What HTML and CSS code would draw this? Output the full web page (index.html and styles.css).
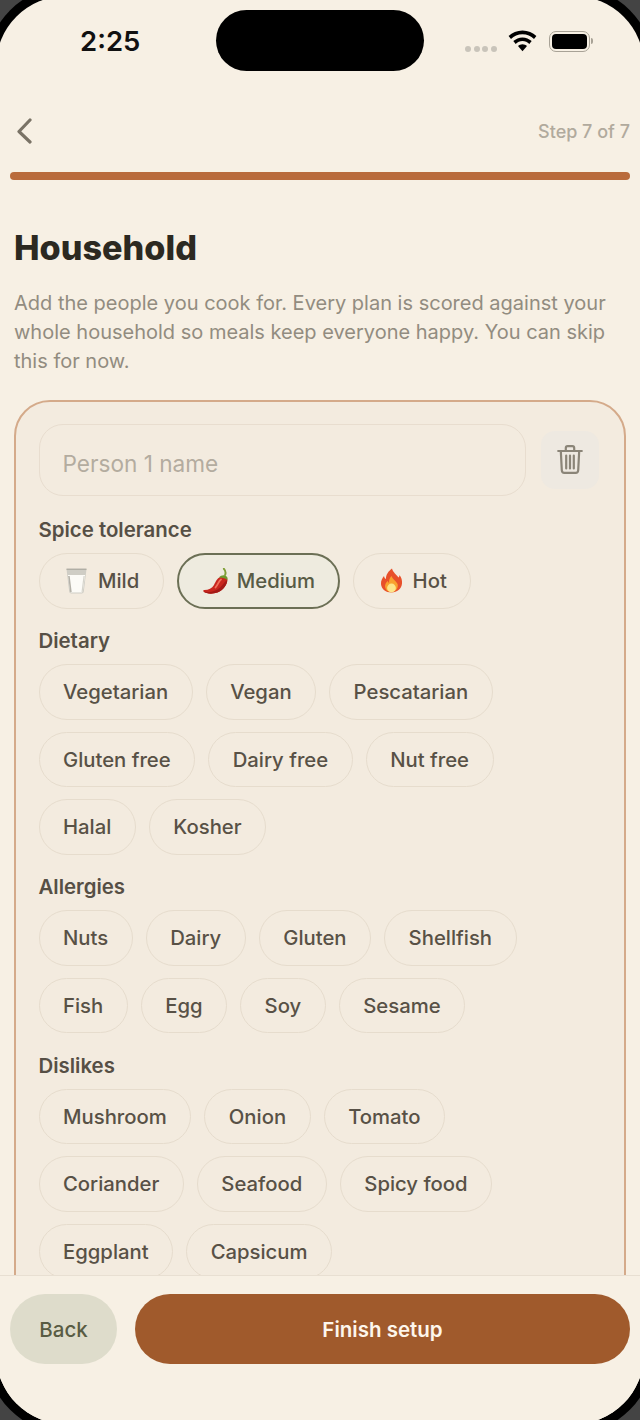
FILE: index.html
```html
<!doctype html>
<html lang="en">

<head>
    <meta charset="utf-8">
    <meta name="viewport" content="width=device-width, initial-scale=1">
    <title>Household</title>
    <link rel="stylesheet" href="styles.css">
</head>

<body>
    <div class="screen">
        <div class="status_bar">
            <span class="time">2:25</span>
            <div class="island"></div>
            <div class="status_icons">
                <div class="signal"><i></i><i></i><i></i><i></i></div>
                <svg class="wifi" width="29" height="22" viewBox="0 0 29 22">
                    <path d="M14.5 0.5C9 0.5 4.2 2.6 0.6 6.1L3 8.9C6 6 10 4.2 14.5 4.2S23 6 26 8.9L28.4 6.1C24.8 2.6 20 0.5 14.5 0.5Z" fill="#000" />
                    <path d="M14.5 7.4C11 7.4 7.8 8.8 5.3 11.1L7.7 13.9C9.5 12.2 11.9 11.1 14.5 11.1S19.5 12.2 21.3 13.9L23.7 11.1C21.2 8.8 18 7.4 14.5 7.4Z" fill="#000" />
                    <path d="M14.5 14.2C12.8 14.2 11.2 14.9 10 16L14.5 21.2L19 16C17.8 14.9 16.2 14.2 14.5 14.2Z" fill="#000" />
                </svg>
                <div class="battery">
                    <div class="battery_fill"></div>
                </div>
                <div class="battery_cap"></div>
            </div>
        </div>

        <div class="main">
            <div class="top_nav">
                <svg class="back_arrow" width="16" height="26" viewBox="0 0 16 26">
                    <path d="M14 2L3 13.5L14 24" fill="none" stroke="#7a7366" stroke-width="3.2" stroke-linecap="round" stroke-linejoin="round" />
                </svg>
                <span class="step">Step 7 of 7</span>
            </div>
            <div class="progress"></div>

            <div class="content">
                <h1>Household</h1>
                <p class="intro">Add the people you cook for. Every plan is scored against your whole household so meals keep everyone happy. You can skip this for now.</p>

                <div class="person_card">
                    <div class="name_row">
                        <div class="name_input">Person 1 name</div>
                        <div class="trash_button">
                            <svg width="26" height="29" viewBox="0 0 26 29" fill="none" stroke="#8b8578" stroke-width="2.2" stroke-linecap="round" stroke-linejoin="round">
                                <path d="M1.2 6H24.8" />
                                <path d="M8.8 6V3C8.8 1.8 9.6 1.2 10.6 1.2H15.4C16.4 1.2 17.2 1.8 17.2 3V6" />
                                <path d="M3.8 6L4.8 25.2C4.9 26.9 5.8 27.8 7.3 27.8H18.7C20.2 27.8 21.1 26.9 21.2 25.2L22.2 6" />
                                <path d="M9.2 10.5V23.5M13 10.5V23.5M16.8 10.5V23.5" />
                            </svg>
                        </div>
                    </div>

                    <div class="section">
                        <div class="section_label">Spice tolerance</div>
                        <div class="chips">
                            <div class="chip">
                                <svg class="emoji" width="27" height="26" viewBox="-2.5 0 27 26">
                                    <path d="M1 1H21L18.3 23.6C18.2 24.8 17.2 25.5 16.2 25.5H5.8C4.8 25.5 3.8 24.8 3.7 23.6Z" fill="#cfcdc5" />
                                    <path d="M2.4 7H19.6L17.4 23C17.3 24 16.6 24.6 15.7 24.6H6.3C5.4 24.6 4.7 24 4.6 23Z" fill="#fcfbf7" />
                                    <path d="M3.4 8L5.4 24" stroke="#b4b1a8" stroke-width="1.6" fill="none" />
                                    <path d="M18.6 8L16.6 24" stroke="#d6d4cc" stroke-width="1.2" fill="none" />
                                    <path d="M1 1.2H21" stroke="#a9a69d" stroke-width="1.2" />
                                </svg>
                                Mild
                            </div>
                            <div class="chip selected">
                                <svg class="emoji" width="27" height="26" viewBox="-0.5 0 27 26">
                                    <path d="M24.8 11C25.2 16 21 22 15 24.5C10 26.3 4 26 1 23.6C0.4 22.8 1 22 2 22C6 22 9.5 20.5 11.5 17C13 14 14.5 10 18 9C21 8.2 24.4 8.6 24.8 11Z" fill="#c8261e" />
                                    <path d="M24.8 12C24.8 16.5 21 22 15 24.5C10 26.3 4 26 1 23.6C7 25 15 23 19 18C21.5 15 23 13 24.8 12Z" fill="#a31a17" />
                                    <path d="M18.5 11.5C16.2 13 15.6 16.5 13 19.5" stroke="#f0705a" stroke-width="1.8" fill="none" stroke-linecap="round" />
                                    <path d="M16.5 9.6C18.5 7 22.5 6.4 24.6 9C25.2 10 25.2 11.2 24.8 12C23.5 10.5 20.5 10 16.5 9.6Z" fill="#6f9a2e" />
                                    <path d="M22.6 7C23.4 5 23 2.6 21.4 0.8" stroke="#7f9f36" stroke-width="2" fill="none" stroke-linecap="round" />
                                </svg>
                                Medium
                            </div>
                            <div class="chip">
                                <svg class="emoji" width="27" height="25" viewBox="-2.5 0 27 25">
                                    <path d="M11.5 0.5C12.5 4.5 16 6.5 18 9.5C18.8 8.8 19 8 19 7C21 9.5 21.8 12.5 21.5 15.5C21 21 16.5 24.5 11 24.5S0.8 21 0.5 16C0.3 12.5 2 10 3.5 8C3.8 9.5 4.3 10.5 5.5 11C5.2 7 8 3 11.5 0.5Z" fill="#e8502a" />
                                    <path d="M11 8C11.8 11 15 12.5 16.8 15.5C18.5 18.5 16 24 11 24S3.5 19.5 5 16C5.6 14.5 6.5 13.8 7.3 13C7.6 14 8 14.6 8.6 15C8.2 12.5 9.2 10 11 8Z" fill="#f9a12e" />
                                    <ellipse cx="11" cy="20" rx="4.4" ry="4.4" fill="#fde58a" />
                                </svg>
                                Hot
                            </div>
                        </div>
                    </div>

                    <div class="section">
                        <div class="section_label">Dietary</div>
                        <div class="chips">
                            <div class="chip">Vegetarian</div>
                            <div class="chip">Vegan</div>
                            <div class="chip">Pescatarian</div>
                            <div class="chip">Gluten free</div>
                            <div class="chip">Dairy free</div>
                            <div class="chip">Nut free</div>
                            <div class="chip">Halal</div>
                            <div class="chip">Kosher</div>
                        </div>
                    </div>

                    <div class="section">
                        <div class="section_label">Allergies</div>
                        <div class="chips">
                            <div class="chip">Nuts</div>
                            <div class="chip">Dairy</div>
                            <div class="chip">Gluten</div>
                            <div class="chip">Shellfish</div>
                            <div class="chip">Fish</div>
                            <div class="chip">Egg</div>
                            <div class="chip">Soy</div>
                            <div class="chip">Sesame</div>
                        </div>
                    </div>

                    <div class="section">
                        <div class="section_label">Dislikes</div>
                        <div class="chips">
                            <div class="chip">Mushroom</div>
                            <div class="chip">Onion</div>
                            <div class="chip">Tomato</div>
                            <div class="chip">Coriander</div>
                            <div class="chip">Seafood</div>
                            <div class="chip">Spicy food</div>
                            <div class="chip">Eggplant</div>
                            <div class="chip">Capsicum</div>
                        </div>
                    </div>
                </div>
            </div>
        </div>

        <div class="footer">
            <button class="back_button">Back</button>
            <button class="finish_button">Finish setup</button>
        </div>
    </div>
</body>

</html>
```

FILE: styles.css
```css
/* Phone frame */
html,
body {
    margin: 0;
    padding: 0;
    height: 100%;
    overflow: hidden;
    background-color: #444;
}

body {
    font-family: Inter, "Liberation Sans", sans-serif;
}

.screen {
    box-sizing: border-box;
    width: 648px;
    height: 1428px;
    margin: -4px;
    padding: 4px;
    border-radius: 70px;
    background-color: #f7f0e4;
    box-shadow: 0 0 0 9px #000;
    display: flex;
    flex-direction: column;
    overflow: hidden;
}

/* Status bar */
.status_bar {
    flex: none;
    height: 99px;
    padding-top: 10px;
    box-sizing: border-box;
    display: flex;
    align-items: flex-start;
}

.time {
    width: 216px;
    padding-left: 80px;
    box-sizing: border-box;
    font-size: 27.5px;
    font-weight: 600;
    line-height: 62px;
    color: #111;
}

.island {
    width: 208px;
    height: 61px;
    border-radius: 31px;
    background-color: #000;
}

.status_icons {
    display: flex;
    align-items: center;
    height: 62px;
    padding-left: 41px;
}

.signal {
    display: flex;
    gap: 2.5px;
    margin-top: 15px;
}

.signal i {
    width: 6px;
    height: 6px;
    border-radius: 50%;
    background-color: #c9c4ba;
}

.wifi {
    margin-left: 11px;
}

.battery {
    margin-left: 12px;
    box-sizing: border-box;
    width: 41px;
    height: 21px;
    padding: 2px;
    border: 1.5px solid #a8a296;
    border-radius: 7px;
}

.battery_fill {
    height: 100%;
    border-radius: 4px;
    background-color: #000;
}

.battery_cap {
    width: 2px;
    height: 6px;
    margin-left: 1px;
    border-radius: 0 2px 2px 0;
    background-color: #a8a296;
}

/* Main scroll area */
.main {
    flex: 1;
    min-height: 0;
    overflow: hidden;
}

.top_nav {
    display: flex;
    justify-content: space-between;
    align-items: center;
    height: 64px;
    padding: 0 10px 0 16px;
}

.step {
    font-size: 18px;
    font-weight: 500;
    color: #b1aa9d;
}

.progress {
    height: 8px;
    margin: 9px 10px 0;
    border-radius: 4px;
    background-color: #b96b3c;
}

.content {
    padding: 0 14px;
}

h1 {
    margin: 46px 0 0;
    font-size: 34.2px;
    line-height: 44px;
    font-weight: 800;
    color: #2c2921;
}

.intro {
    margin: 19px 0 0;
    font-size: 20px;
    line-height: 29px;
    color: #928c80;
}

/* Person card */
.person_card {
    margin-top: 24px;
    padding: 22px 25.5px 22px 22.5px;
    border: 2px solid #d4aa8a;
    border-radius: 36px;
    background-color: #f3ebdf;
}

.name_row {
    display: flex;
    align-items: center;
    gap: 14.5px;
    margin-bottom: 22px;
}

.name_input {
    flex: 1;
    box-sizing: border-box;
    height: 72px;
    padding-left: 23px;
    border: 1.5px solid #e8ddcf;
    border-radius: 24px;
    font-size: 22.6px;
    line-height: 78px;
    color: #b3ac9f;
}

.trash_button {
    flex: none;
    width: 58px;
    height: 58px;
    margin-top: -1px;
    border-radius: 14px;
    background-color: #eee9e1;
    display: flex;
    justify-content: center;
    align-items: center;
}

.section {
    margin-bottom: 20.5px;
}

.section_label {
    margin-bottom: 11px;
    font-size: 20.4px;
    line-height: 24px;
    font-weight: 600;
    color: #564f45;
}

.chips {
    display: flex;
    flex-wrap: wrap;
    gap: 12px 13px;
}

.chip {
    box-sizing: border-box;
    height: 55.5px;
    padding: 0 23.5px;
    border: 1.5px solid #e6dccd;
    border-radius: 28px;
    display: flex;
    align-items: center;
    gap: 8px;
    font-size: 20.3px;
    font-weight: 450;
    color: #585146;
}

.chip.selected {
    padding: 0 23px;
    border: 2px solid #6b6f55;
    background-color: #eeebdf;
    color: #585b45;
}

/* Footer */
.footer {
    flex: none;
    box-sizing: border-box;
    height: 145px;
    padding: 18px 10px 0;
    border-top: 1.5px solid #e8dfd2;
    background-color: #f7f0e4;
    display: flex;
    align-items: flex-start;
    gap: 18px;
}

button {
    height: 70px;
    border: none;
    border-radius: 35px;
    font-family: inherit;
    font-size: 20.5px;
    font-weight: 500;
}

.back_button {
    width: 107px;
    background-color: #dedccb;
    color: #595c44;
}

.finish_button {
    flex: 1;
    font-weight: 600;
    background-color: #a05a2c;
    color: #fdf6ec;
}
```
